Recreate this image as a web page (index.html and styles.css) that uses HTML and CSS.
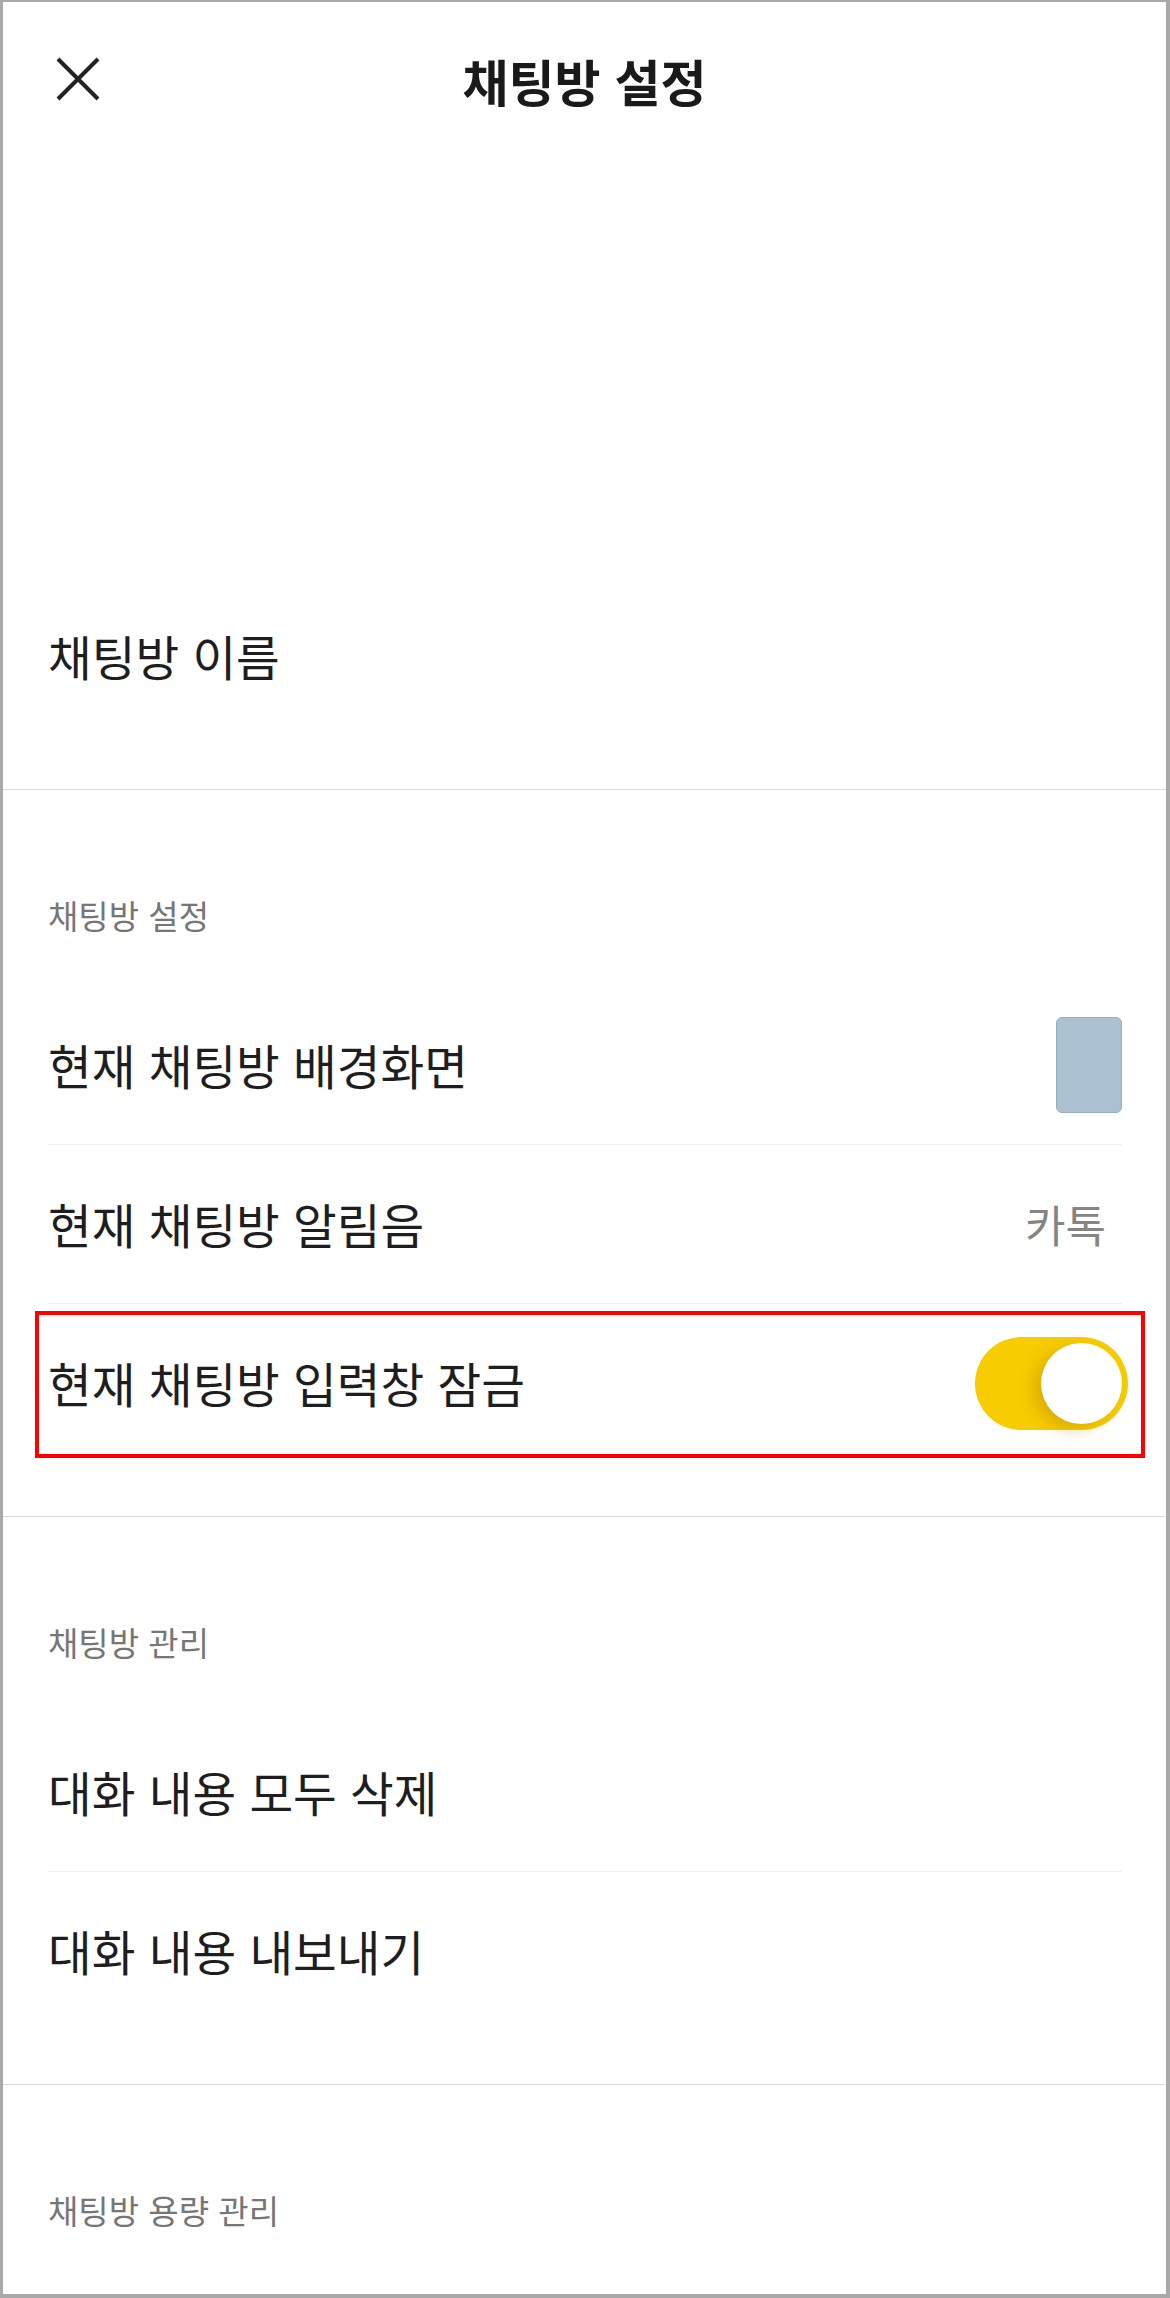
FILE: index.html
```html
<!DOCTYPE html>
<html lang="ko">
<head>
    <meta charset="UTF-8">
    <meta name="viewport" content="width=device-width, initial-scale=1.0">
    <title>채팅방 설정</title>
    <link rel="stylesheet" href="styles.css">
</head>
<body>
    <div class="frame">
        <header class="topbar">
            <button class="close-btn" aria-label="닫기">
                <svg width="44" height="44" viewBox="0 0 44 44">
                    <path d="M2 2 L42 42 M42 2 L2 42" stroke="#222" stroke-width="4" fill="none"/>
                </svg>
            </button>
            <h1 class="title">채팅방 설정</h1>
        </header>

        <div class="name-block">
            <p class="name-label">채팅방 이름</p>
        </div>

        <section class="group">
            <h2 class="group-title">채팅방 설정</h2>
            <div class="row">
                <span class="row-label">현재 채팅방 배경화면</span>
                <span class="bg-thumb"></span>
            </div>
            <div class="row">
                <span class="row-label">현재 채팅방 알림음</span>
                <span class="row-value">카톡</span>
            </div>
            <div class="row highlighted">
                <span class="row-label">현재 채팅방 입력창 잠금</span>
                <span class="toggle on"><span class="knob"></span></span>
                <span class="mark"></span>
            </div>
        </section>

        <section class="group">
            <h2 class="group-title">채팅방 관리</h2>
            <div class="row">
                <span class="row-label">대화 내용 모두 삭제</span>
            </div>
            <div class="row">
                <span class="row-label">대화 내용 내보내기</span>
            </div>
        </section>

        <section class="group">
            <h2 class="group-title">채팅방 용량 관리</h2>
        </section>
    </div>
</body>
</html>
```

FILE: styles.css
```css
/* Base */
body {
    margin: 0;
    padding: 0;
    background-color: #fff;
    font-family: "Noto Sans CJK KR", "Noto Sans", sans-serif;
    color: #1e1e1e;
}

.frame {
    width: 1170px;
    height: 2298px;
    box-sizing: border-box;
    border-style: solid;
    border-color: #a9a9a9;
    border-width: 2px 4px 4px 3px;
    overflow: hidden;
    background-color: #fff;
}

/* Top bar */
.topbar {
    position: relative;
    height: 156px;
    display: flex;
    align-items: center;
    justify-content: center;
}

.close-btn {
    position: absolute;
    left: 53px;
    top: 55px;
    width: 44px;
    height: 44px;
    padding: 0;
    border: none;
    background: none;
}

.close-btn svg {
    display: block;
}

.title {
    margin: 0;
    font-size: 50px;
    font-weight: 700;
    line-height: 60px;
    color: #1a1a1a;
}

/* Chat room name */
.name-block {
    height: 632px;
    box-sizing: border-box;
    display: flex;
    align-items: flex-end;
    padding: 0 45px 103px;
    border-bottom: 1px solid #dcdcdc;
}

.name-label {
    margin: 0;
    font-size: 47.5px;
    line-height: 60px;
}

/* Groups */
.group {
    padding-bottom: 54px;
    border-bottom: 1px solid #dcdcdc;
}

.group-title {
    margin: 0;
    padding: 108px 45px 54px;
    font-size: 33px;
    font-weight: 400;
    line-height: 34px;
    color: #767676;
}

.row {
    position: relative;
    height: 158px;
    margin: 0 44px 0 45px;
    display: flex;
    align-items: center;
    justify-content: space-between;
}

.row + .row {
    border-top: 1px solid #efefef;
}

.row-label {
    font-size: 47.5px;
    line-height: 60px;
}

.row-value {
    margin-right: 16px;
    font-size: 44px;
    color: #858585;
}

.bg-thumb {
    width: 66px;
    height: 96px;
    box-sizing: border-box;
    border: 1px solid #98aec0;
    border-radius: 6px;
    background-color: #abc0d1;
}

/* Toggle */
.toggle {
    position: relative;
    width: 153px;
    height: 93px;
    margin-right: -6px;
    border-radius: 47px;
    background-color: #f7cc00;
}

.toggle .knob {
    position: absolute;
    top: 6px;
    right: 6px;
    width: 81px;
    height: 81px;
    border-radius: 50%;
    background-color: #fff;
    box-shadow: -8px 5px 14px rgba(190, 140, 0, 0.45);
}

/* Red annotation box */
.mark {
    position: absolute;
    top: 7px;
    bottom: 4px;
    left: -13px;
    right: -23px;
    border: 4px solid #ff0000;
    pointer-events: none;
}
```
